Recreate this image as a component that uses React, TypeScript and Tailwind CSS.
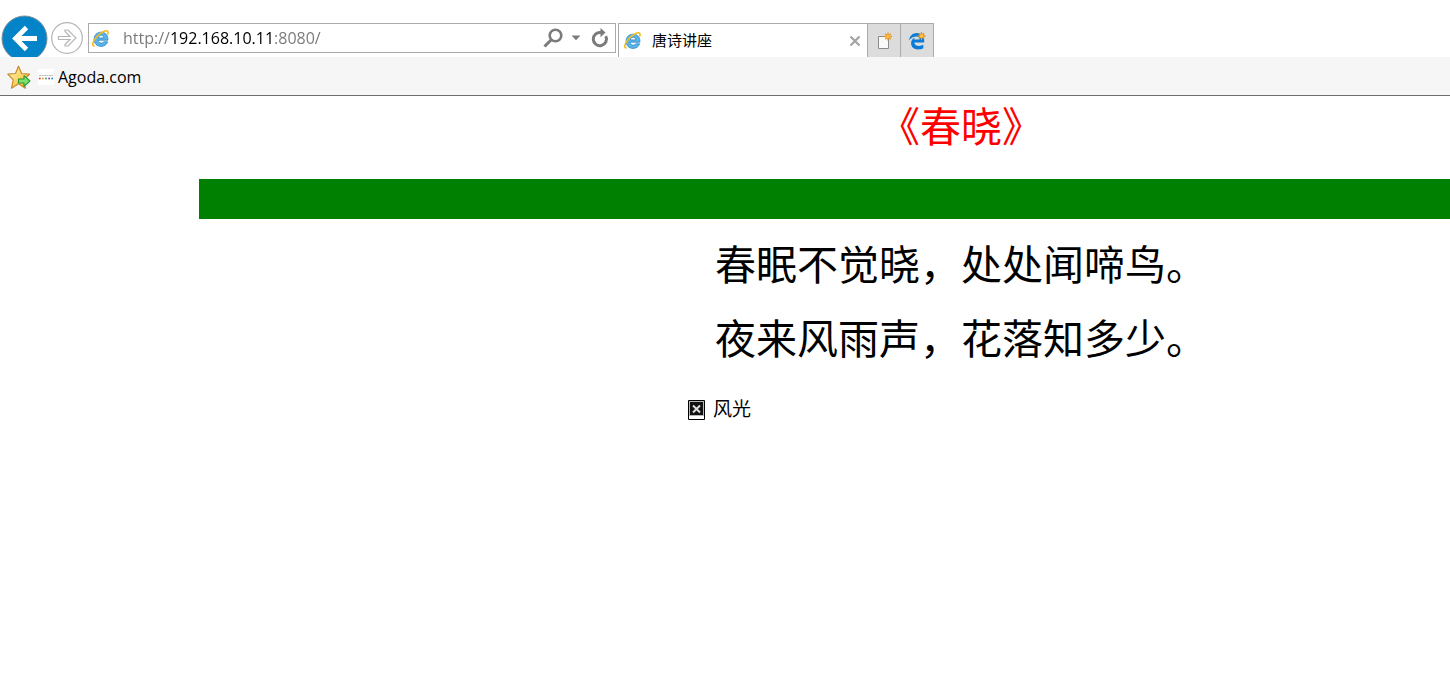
import type { ReactNode } from "react";

const poem = ["春眠不觉晓，处处闻啼鸟。", "夜来风雨声，花落知多少。"];

function ExplorerIcon() {
  return (
    <svg viewBox="0 0 17 17" className="h-[17px] w-[17px] shrink-0" fill="none">
      <path
        d="M9 2.200c4.200 0 6.900 2.900 6.900 6.700v1.300H6.200c.2 1.900 1.300 2.900 3 2.900 1.200 0 2-.4 2.500-1.300h3.900c-.9 2.900-3.300 4.600-6.500 4.600-4.200 0-7-2.800-7-7.100 0-4.200 2.800-7.100 6.900-7.100ZM6.300 7.900h5.600C11.700 6.200 10.700 5.200 9.100 5.200S6.600 6.200 6.300 7.900Z"
        fill="#5ab4e8"
        fillRule="evenodd"
        stroke="#2b86c4"
        strokeWidth=".8"
      />
      <path
        d="M2.600 15.900C-.6 16.200.6 11.400 4.600 7 8.800 2.400 14.200-.4 15.700 1.400c.6.7.4 1.900-.2 3.200"
        stroke="#f3bd1d"
        strokeWidth="1.600"
      />
    </svg>
  );
}

function SparkIcon({ x, y }: { x: number; y: number }) {
  return (
    <g transform={`translate(${x} ${y})`}>
      <path
        d="M0-4v8M-4 0h8M-2.700-2.700l5.400 5.400M2.700-2.700l-5.400 5.400"
        stroke="#e8951c"
        strokeWidth="1.300"
      />
      <circle r="1.800" fill="#ffc04a" />
    </g>
  );
}

function FavoritesIcon() {
  return (
    <svg viewBox="0 0 24 25" className="h-[25px] w-6" fill="none">
      <defs>
        <linearGradient id="star" x1="0" y1="0" x2="1" y2="1">
          <stop offset="0" stopColor="#fff6cf" />
          <stop offset=".5" stopColor="#fbd766" />
          <stop offset="1" stopColor="#f0a92e" />
        </linearGradient>
      </defs>
      <path
        d="M11.500 1.200 14.600 8.500 22.500 9.200 16.500 14.700 18.400 23.200 11.500 18.800 4.500 23.200 6.300 14.900.8 9.200 8.500 8.500Z"
        fill="url(#star)"
        stroke="#c98b2b"
        strokeWidth="1.200"
        strokeLinejoin="round"
      />
      <path
        d="M11.500 14h5.500v-3.300l6 5.300-6 5.300V18h-5.500Z"
        fill="#7fe071"
        stroke="#279b33"
        strokeWidth="1.100"
        strokeLinejoin="round"
      />
    </svg>
  );
}

function AgodaIcon() {
  return (
    <svg viewBox="0 0 16 16" className="h-4 w-4">
      <path fill="#fff" d="M0 0h16v16H0z" />
      <path d="M1 6.500h14" stroke="#bdbdbd" strokeDasharray="2 .5" />
      <circle cx="1.800" cy="9.500" r="1" fill="#e5404a" />
      <circle cx="4.900" cy="9.500" r="1" fill="#ee9b32" />
      <circle cx="8" cy="9.500" r="1" fill="#3ea65a" />
      <circle cx="11.100" cy="9.500" r="1" fill="#8d4aa5" />
      <circle cx="14.200" cy="9.500" r="1" fill="#2f8bdc" />
    </svg>
  );
}

function TabButton({ label, children }: { label: string; children: ReactNode }) {
  return (
    <button
      type="button"
      aria-label={label}
      className="flex w-[33px] items-center justify-center border-t border-r border-[#ababab] bg-[#dcdcdc]"
    >
      {children}
    </button>
  );
}

function AddressBar() {
  return (
    <form className="ml-[5px] flex h-[30px] w-[528px] items-center border border-[#ababab] bg-white pr-[6px] pl-[3px]">
      <ExplorerIcon />
      {/* the host is darker than the scheme and the port */}
      <input
        type="text"
        aria-label="Address"
        defaultValue="http://192.168.10.11:8080/"
        className="ml-[14px] min-w-0 flex-1 bg-[linear-gradient(90deg,#777_47px,#000_47px,#000_151px,#777_151px)] bg-clip-text text-base text-transparent caret-black outline-none"
      />
      <button type="button" aria-label="Search">
        <svg viewBox="0 0 20 20" className="h-5 w-5" fill="none" stroke="#7b7b7b">
          <circle cx="12.500" cy="7.500" r="5.800" strokeWidth="2.600" />
          <path d="M8.300 11.700 1.500 18.500" strokeWidth="3" />
        </svg>
      </button>
      <button type="button" aria-label="Show address list" className="ml-2">
        <svg viewBox="0 0 10 6" className="h-[6px] w-[10px]" fill="#7b7b7b">
          <path d="M.5.500h9L5 5.200Z" />
        </svg>
      </button>
      <button type="button" aria-label="Refresh" className="ml-[10px]">
        <svg viewBox="0 0 18 20" className="h-5 w-[18px]" fill="none">
          <path
            d="M14.800 8.200A6.600 6.600 0 1 1 10 4.600"
            stroke="#7b7b7b"
            strokeWidth="3"
          />
          <path d="M9.500 0 14.500 4.600 9.500 9.200Z" fill="#7b7b7b" />
        </svg>
      </button>
    </form>
  );
}

function NavigationBar() {
  return (
    <div className="flex h-[57px] items-start overflow-hidden">
      <button type="button" aria-label="Back" className="mt-[15px] ml-px">
        <svg viewBox="0 0 47 47" className="h-[47px] w-[47px]" fill="none">
          <circle cx="23.500" cy="23.500" r="22.500" fill="#0384c8" stroke="#7d8e98" />
          <path
            d="M36 23.500H14M25.500 12.500l-11 11 11 11"
            stroke="#fff"
            strokeWidth="4.800"
          />
        </svg>
      </button>
      <button type="button" aria-label="Forward" className="mt-[22px] ml-[3px]">
        <svg viewBox="0 0 32 32" className="h-8 w-8" fill="#fff" stroke="#b5b5b5">
          <circle cx="16" cy="16" r="15.300" strokeWidth="1.200" />
          <path
            d="M7.500 14.500h11.500l-5-5V8h3l8 8-8 8h-3v-1.500l5-5H7.500Z"
            strokeWidth="1.200"
          />
        </svg>
      </button>
      <div className="mt-[23px] flex">
        <AddressBar />
        <div className="ml-[2px] flex h-[34px]">
          <div className="flex w-[250px] items-center border-x border-t border-[#ababab] bg-white pr-[6px] pl-[5px]">
            <ExplorerIcon />
            <span className="ml-[11px] flex-1 text-[15px]">唐诗讲座</span>
            <button type="button" aria-label="Close tab">
              <svg viewBox="0 0 12 12" className="h-3 w-3">
                <path
                  d="M1.500 1.500l9 9M10.500 1.500l-9 9"
                  stroke="#a3a3a3"
                  strokeWidth="2.200"
                />
              </svg>
            </button>
          </div>
          <TabButton label="New tab">
            <svg viewBox="0 0 16 18" className="h-[18px] w-4" fill="none">
              <path d="M2.500 4.500h10v12h-10Z" fill="#fafafa" stroke="#8b8b8b" />
              <SparkIcon x={12} y={4.500} />
            </svg>
          </TabButton>
          <TabButton label="Open in Edge">
            <svg viewBox="0 0 18 18" className="h-[18px] w-[18px]">
              <path
                d="M1 8.300C1.600 3.800 4.800 1 9 1c4.500 0 7.200 3.200 7.200 7.400v2H6.300c.3 2.600 2.400 3.500 4.700 3.500 1.700 0 3.100-.4 4.300-1.100v3.400c-1.400.8-3.200 1.200-5.200 1.200-4.100 0-7-2.300-7-6.200 0-2.700 1.500-4.700 3.700-5.700-.5.700-.7 1.500-.7 2h5.400c0-2-1.100-3-3.100-3C5.500 4.500 2.800 5.800 1 8.300Z"
                fill="#0a7bd8"
              />
              <SparkIcon x={13.500} y={4} />
            </svg>
          </TabButton>
        </div>
      </div>
    </div>
  );
}

function FavoritesBar() {
  return (
    <div className="flex h-[39px] items-center border-b border-[#6e6e6e] bg-[#f6f6f6] pt-[2px] pl-[7px]">
      <button type="button" aria-label="Add to favorites">
        <FavoritesIcon />
      </button>
      <a href="#agoda" className="ml-[7px] flex items-center gap-1 text-base">
        <AgodaIcon />
        Agoda.com
      </a>
    </div>
  );
}

function BrokenImage({ alt }: { alt: string }) {
  return (
    <div
      role="img"
      aria-label={alt}
      className="mx-auto flex w-[546px] items-center gap-2 text-[19px] leading-7"
    >
      <svg viewBox="0 0 17 20" className="h-5 w-[17px]" fill="none">
        <path d="M.5.500h16v19H.5Z" fill="#fff" stroke="#000" />
        <path d="M1.500 1.500h14v14h-14Z" fill="#111" stroke="#b8b8b8" />
        <path d="M5 5.500l7 7M12 5.500l-7 7" stroke="#ddd" strokeWidth="2" />
      </svg>
      <span>{alt}</span>
    </div>
  );
}

export default function App() {
  return (
    <div className="min-h-screen overflow-x-clip bg-white font-['Open_Sans','Noto_Sans_CJK_SC',sans-serif] text-black">
      <header>
        <NavigationBar />
        <FavoritesBar />
      </header>
      {/* the poem column runs past the right edge of the window */}
      <main className="-mr-[273px] ml-[199px] pt-[5px] text-center font-['Liberation_Serif','Noto_Sans_CJK_SC',serif]">
        <h1 className="text-[41px] leading-[54px] font-normal text-[#ff0000]">
          《春晓》
        </h1>
        <hr className="mt-6 h-10 border-0 bg-[#008000]" />
        <div className="mt-5 flex flex-col gap-5">
          {poem.map((line) => (
            <p key={line} className="text-[41px] leading-[54px] font-normal">
              {line}
            </p>
          ))}
        </div>
        <div className="mt-[29px]">
          <BrokenImage alt="风光" />
        </div>
      </main>
    </div>
  );
}
